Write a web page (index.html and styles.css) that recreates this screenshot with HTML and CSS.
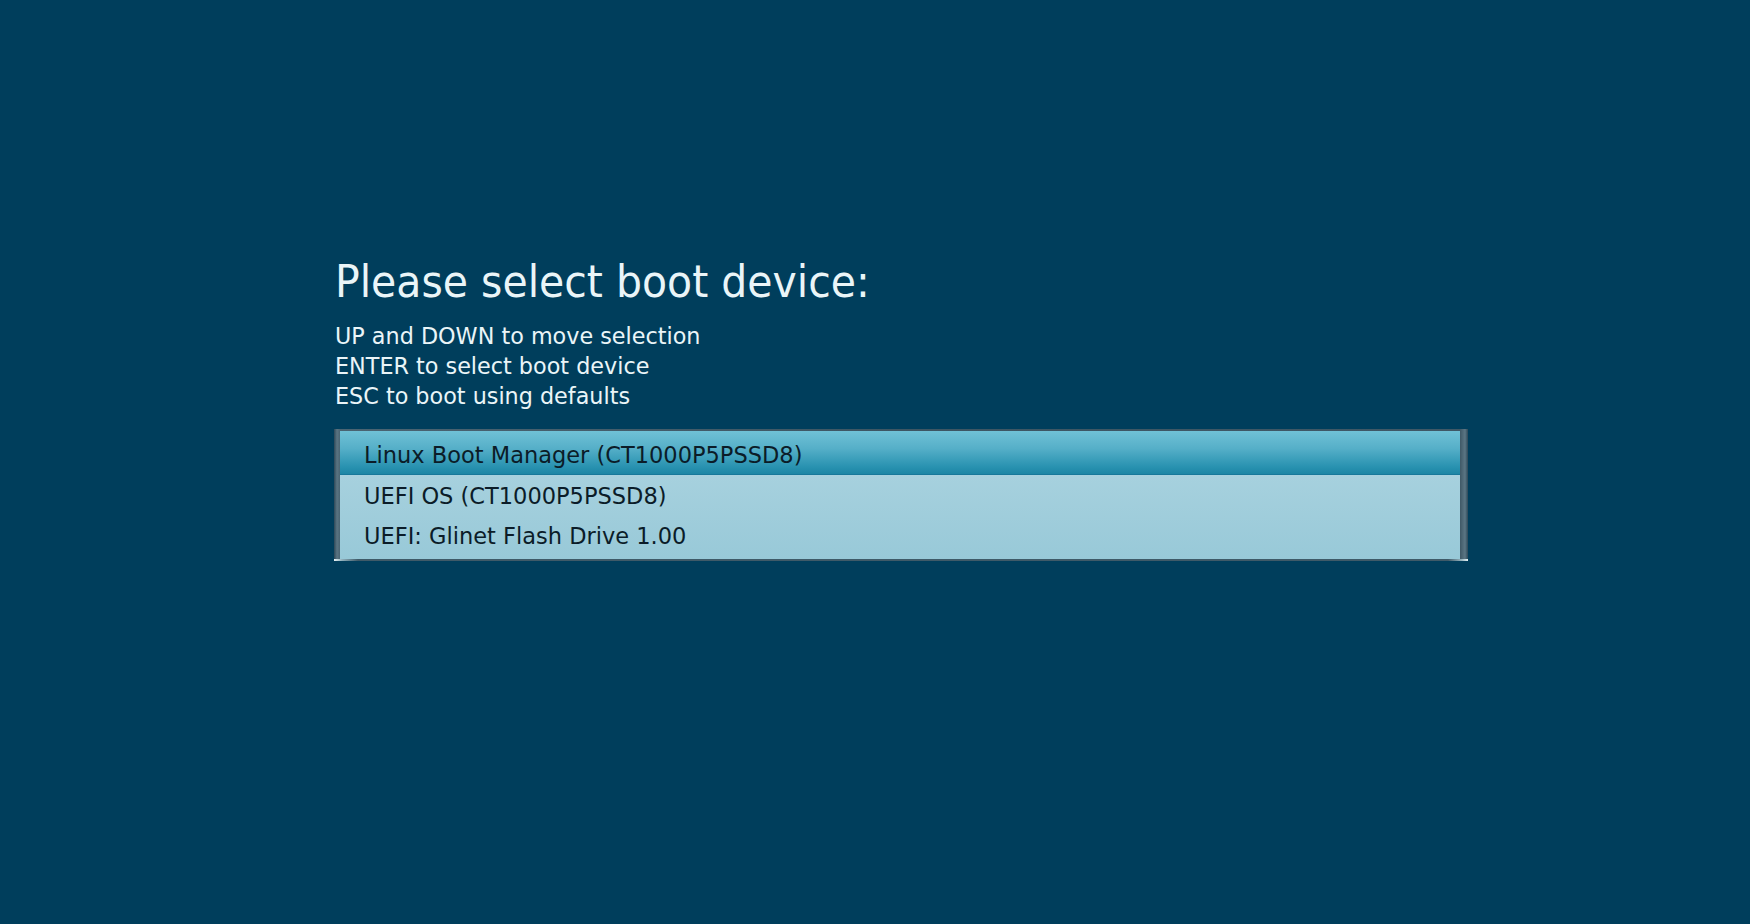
FILE: index.html
```html
<!DOCTYPE html>
<html>
<head>
<meta charset="utf-8">
<link rel="stylesheet" href="styles.css">
</head>
<body>
<main class="screen">
  <h1 class="title">Please select boot device:</h1>
  <div class="help">
    <div class="help-line">UP and DOWN to move selection</div>
    <div class="help-line">ENTER to select boot device</div>
    <div class="help-line">ESC to boot using defaults</div>
  </div>
  <div class="frame">
    <ul class="list">
      <li class="item selected">Linux Boot Manager (CT1000P5PSSD8)</li>
      <li class="item">UEFI OS (CT1000P5PSSD8)</li>
      <li class="item">UEFI: Glinet Flash Drive 1.00</li>
    </ul>
  </div>
</main>
</body>
</html>
```

FILE: styles.css
```css
html, body {
  margin: 0;
  padding: 0;
  background: #003e5c;
  width: 1750px;
  height: 924px;
  overflow: hidden;
}

.screen {
  padding: 259px 0 0 334px;
  font-family: "DejaVu Sans", Verdana, sans-serif;
  color: #eaf5f8;
}

.title {
  margin: 0 0 14px 1px;
  font-size: 41px;
  font-weight: normal;
  line-height: 48px;
  transform: scaleY(1.07);
  transform-origin: 0 80%;
}

.help {
  margin: 0 0 18px 1px;
  font-size: 22.3px;
  line-height: 30px;
}

.frame {
  width: 1120px;
  padding: 2px 8px 2px 6px;
  background: linear-gradient(to right, #2c4858 0, #5a7482 3px, #4a6472 6px, #3d5663 50%, #3f5866 calc(100% - 8px), #5c7684 calc(100% - 3px), #2c4858 100%);
  position: relative;
}

.frame::after {
  content: "";
  position: absolute;
  left: 0;
  right: 0;
  bottom: 0;
  height: 2px;
  background: linear-gradient(to right, #e8f2f4 0, #8fb0bc 8px, #3f5a68 24px, #3f5a68 calc(100% - 20px), #9ab8c2 calc(100% - 6px), #e8f2f4 100%);
}

.list {
  list-style: none;
  margin: 0;
  padding: 0 0 4px 0;
  background: linear-gradient(to bottom, #aed5e1 0, #98c9d8 100%);
  color: #0b1c28;
  font-size: 22.5px;
}

.item {
  height: 39px;
  padding-top: 1px;
  line-height: 40px;
  padding-left: 24px;
  white-space: nowrap;
}

.item.selected {
  height: 40px;
  line-height: 41px;
  padding-top: 4px;
  background: linear-gradient(to bottom, #70c1d6 0, #55afc8 40%, #2a93b1 80%, #1a84a3 100%);
  box-shadow: inset 0 -1px 0 #16789a;
}
```
